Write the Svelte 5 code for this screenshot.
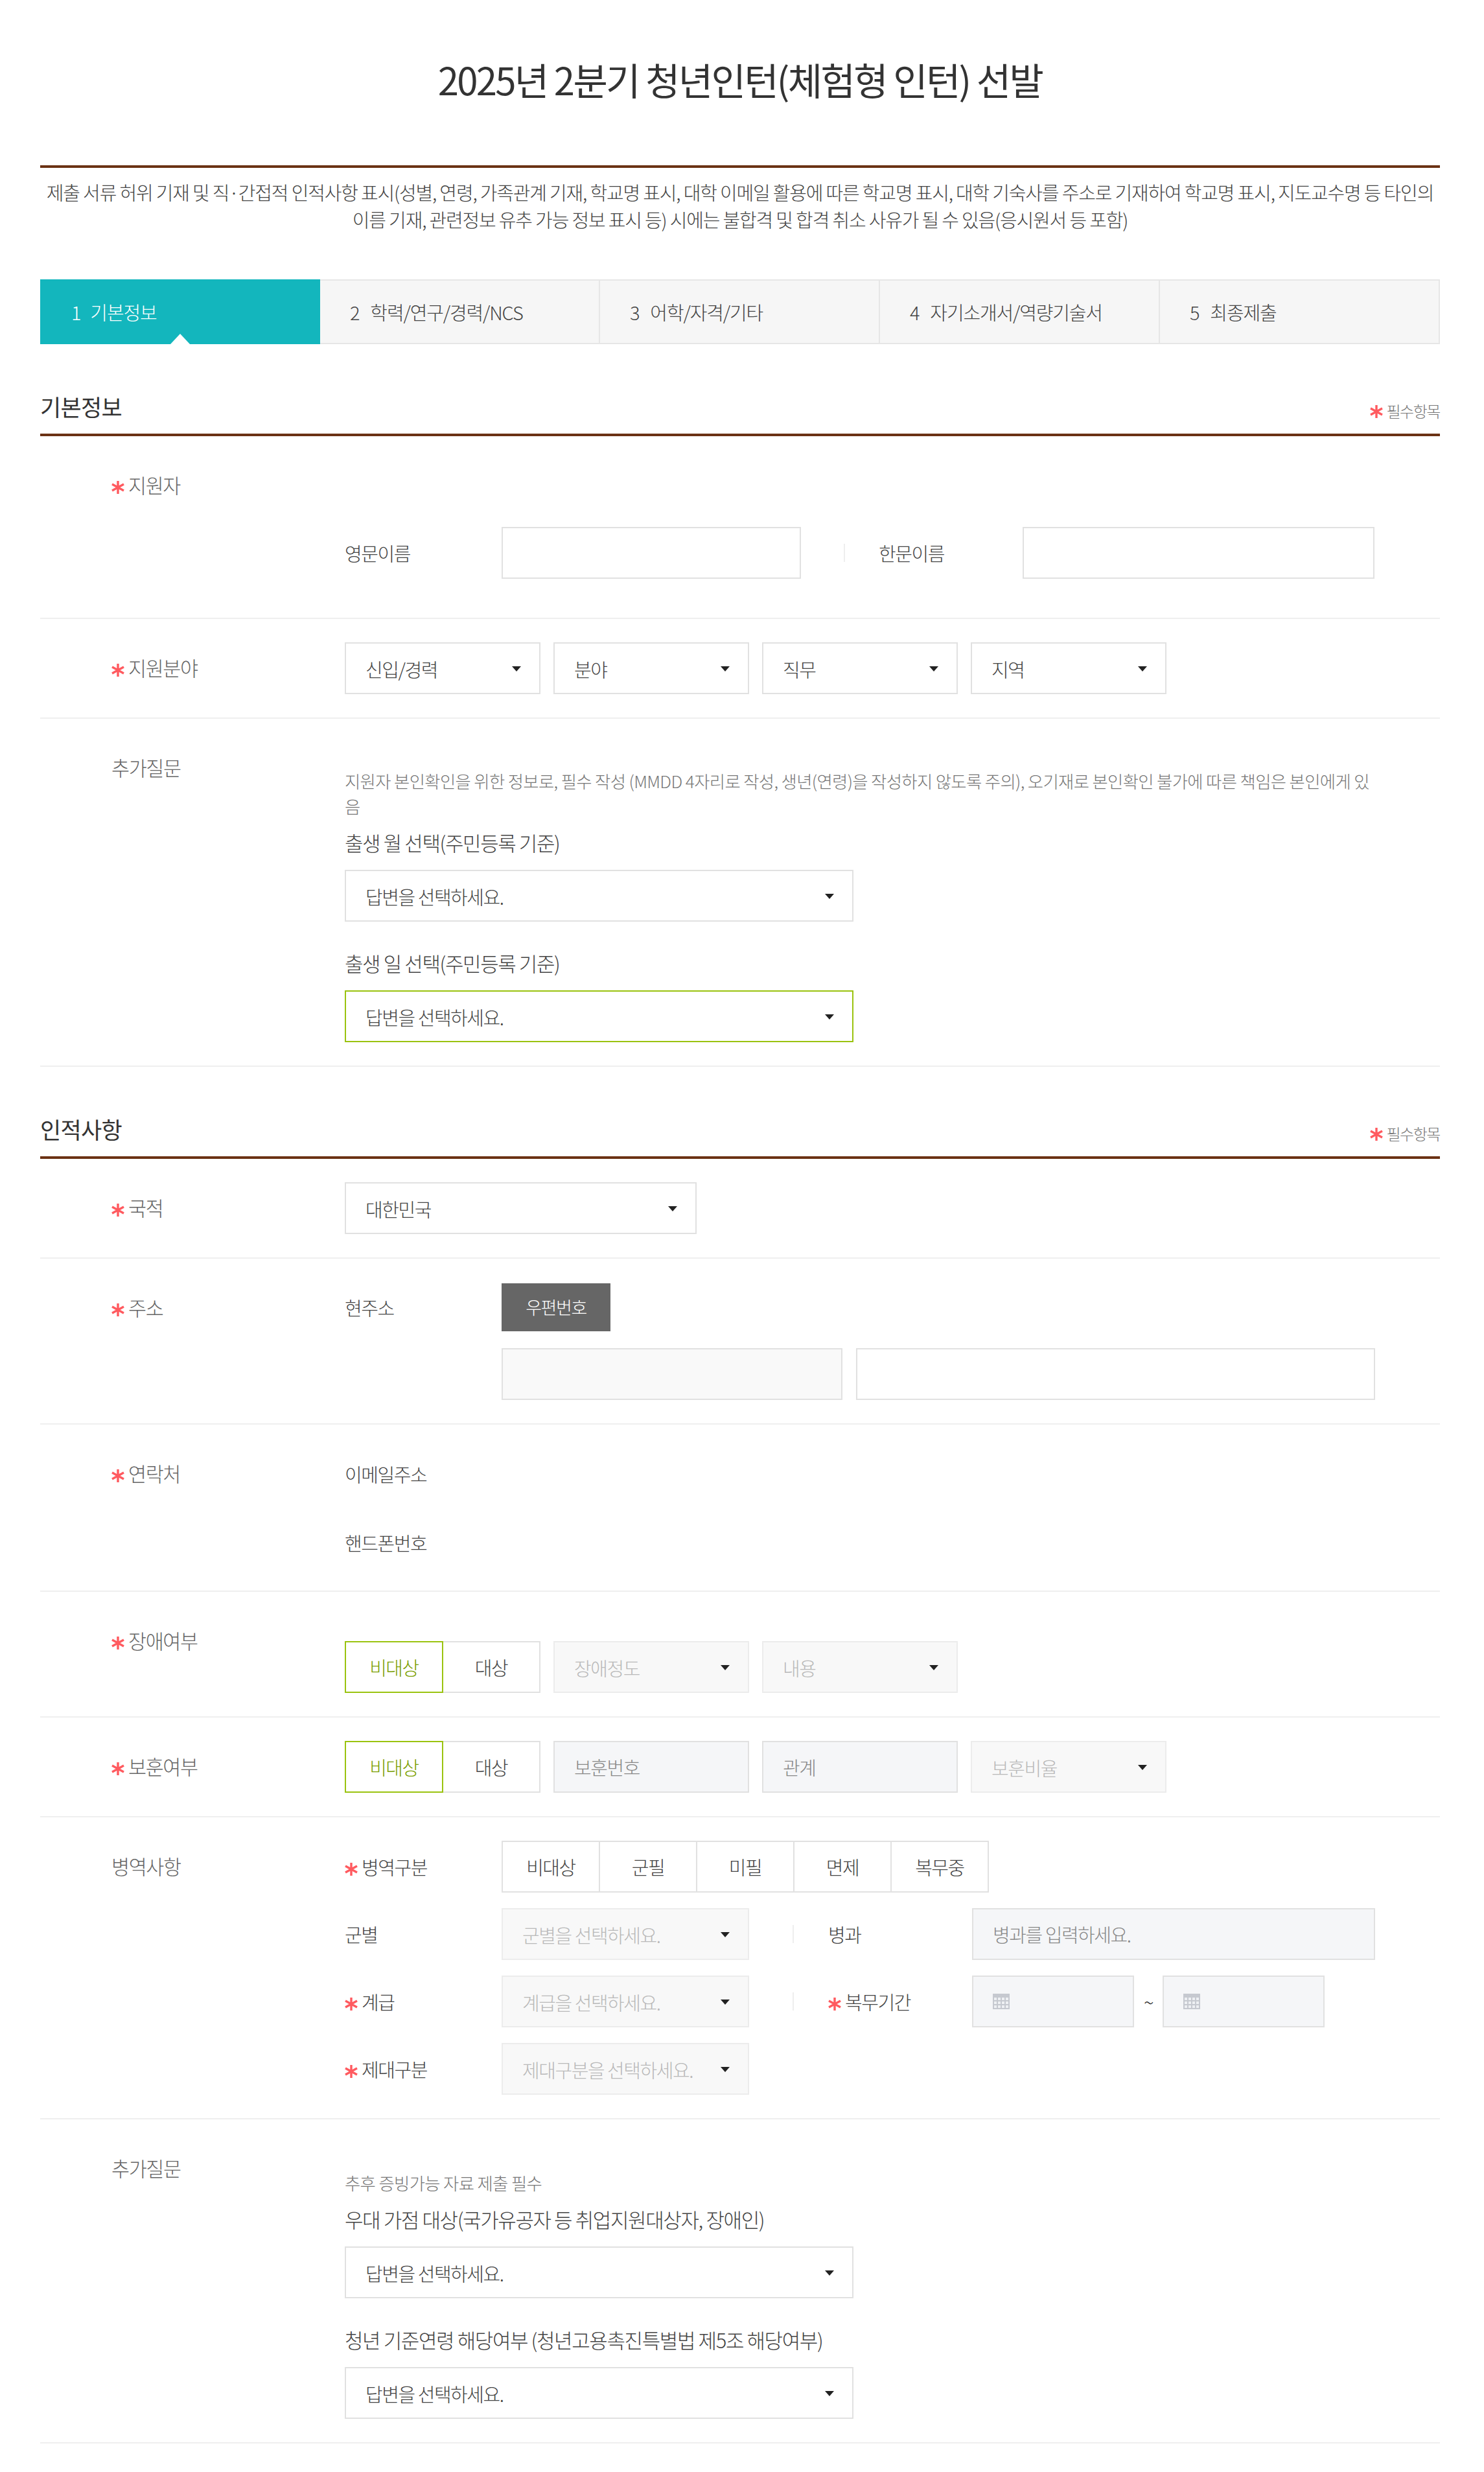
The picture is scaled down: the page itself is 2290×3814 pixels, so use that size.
<script>
	const tabs = ['기본정보', '학력/연구/경력/NCS', '어학/자격/기타', '자기소개서/역량기술서', '최종제출'];
	const military = ['비대상', '군필', '미필', '면제', '복무중'];
</script>

{#snippet star()}
	<svg class="star" viewBox="0 0 20 20" aria-hidden="true">
		<path d="M10 0v20M1 5l18 10M19 5L1 15" />
	</svg>
{/snippet}

{#snippet sel(text, cls = '')}
	<div class="sel {cls}"><span>{text}</span></div>
{/snippet}

{#snippet toggle(items, active)}
	<div class="toggle">
		{#each items as item, i}
			<button type="button" class:on={i === active}>{item}</button>
		{/each}
	</div>
{/snippet}

{#snippet calendar()}
	<svg class="cal" viewBox="0 0 26 24" aria-hidden="true">
		<rect width="26" height="24" fill="#c6c9d0" />
		{#each [6, 12, 18] as y}
			{#each [2, 8, 14, 20] as x}
				<rect {x} {y} width="4" height="4" fill="#eef0f3" />
			{/each}
		{/each}
	</svg>
{/snippet}

{#snippet section(title)}
	<div class="sec-head">
		<h2>{title}</h2>
		<span class="legend">{@render star()}필수항목</span>
	</div>
{/snippet}

<div class="page">
	<h1>2025년 2분기 청년인턴(체험형 인턴) 선발</h1>

	<p class="notice">제출 서류 허위 기재 및 직·간접적 인적사항 표시(성별, 연령, 가족관계 기재, 학교명 표시, 대학 이메일 활용에 따른 학교명 표시, 대학 기숙사를 주소로 기재하여 학교명 표시, 지도교수명 등 타인의 이름 기재, 관련정보 유추 가능 정보 표시 등) 시에는 불합격 및 합격 취소 사유가 될 수 있음(응시원서 등 포함)</p>

	<ul class="tabs">
		{#each tabs as tab, i}
			<li class:active={i === 0}><b>{i + 1}</b>{tab}</li>
		{/each}
	</ul>

	{@render section('기본정보')}

	<div class="row">
		<div class="label">{@render star()}지원자</div>
		<div class="body pt-name">
			<div class="line">
				<span class="key">영문이름</span>
				<input class="w462" />
				<i class="sep first"></i>
				<span class="key short">한문이름</span>
				<input class="w543" />
			</div>
		</div>
	</div>

	<div class="row">
		<div class="label">{@render star()}지원분야</div>
		<div class="body">
			<div class="line wrap">
				{@render sel('신입/경력')}
				{@render sel('분야')}
				{@render sel('직무')}
				{@render sel('지역')}
			</div>
		</div>
	</div>

	<div class="row">
		<div class="label">추가질문</div>
		<div class="body pt-note">
			<p class="note">지원자 본인확인을 위한 정보로, 필수 작성 (MMDD 4자리로 작성, 생년(연령)을 작성하지 않도록 주의), 오기재로 본인확인 불가에 따른 책임은 본인에게 있음</p>
			<p class="q">출생 월 선택(주민등록 기준)</p>
			{@render sel('답변을 선택하세요.', 'wide')}
			<p class="q next">출생 일 선택(주민등록 기준)</p>
			{@render sel('답변을 선택하세요.', 'wide focus')}
		</div>
	</div>

	{@render section('인적사항')}

	<div class="row">
		<div class="label">{@render star()}국적</div>
		<div class="body">{@render sel('대한민국', 'nation')}</div>
	</div>

	<div class="row">
		<div class="label">{@render star()}주소</div>
		<div class="body pt-38">
			<div class="line">
				<span class="key">현주소</span>
				<button type="button" class="zip">우편번호</button>
			</div>
			<div class="line addr">
				<input class="w526 locked" />
				<input class="w801" />
			</div>
		</div>
	</div>

	<div class="row">
		<div class="label">{@render star()}연락처</div>
		<div class="body pt-contact">
			<div class="line"><span class="key">이메일주소</span></div>
			<div class="line phone"><span class="key">핸드폰번호</span></div>
		</div>
	</div>

	<div class="row">
		<div class="label">{@render star()}장애여부</div>
		<div class="body pt-76">
			<div class="line wrap">
				{@render toggle(['비대상', '대상'], 0)}
				{@render sel('장애정도', 'off')}
				{@render sel('내용', 'off')}
			</div>
		</div>
	</div>

	<div class="row">
		<div class="label">{@render star()}보훈여부</div>
		<div class="body">
			<div class="line wrap">
				{@render toggle(['비대상', '대상'], 0)}
				<input class="w302 locked" placeholder="보훈번호" />
				<input class="w302 locked" placeholder="관계" />
				{@render sel('보훈비율', 'off')}
			</div>
		</div>
	</div>

	<div class="row">
		<div class="label">병역사항</div>
		<div class="body mil">
			<div class="line">
				<span class="key">{@render star()}병역구분</span>
				{@render toggle(military, -1)}
			</div>
			<div class="line">
				<span class="key">군별</span>
				{@render sel('군별을 선택하세요.', 'off mid')}
				<i class="sep"></i>
				<span class="key short2">병과</span>
				<input class="w624 locked" placeholder="병과를 입력하세요." />
			</div>
			<div class="line">
				<span class="key">{@render star()}계급</span>
				{@render sel('계급을 선택하세요.', 'off mid')}
				<i class="sep"></i>
				<span class="key short2">{@render star()}복무기간</span>
				<div class="date">{@render calendar()}</div>
				<span class="tilde">~</span>
				<div class="date">{@render calendar()}</div>
			</div>
			<div class="line">
				<span class="key">{@render star()}제대구분</span>
				{@render sel('제대구분을 선택하세요.', 'off mid')}
			</div>
		</div>
	</div>

	<div class="row">
		<div class="label">추가질문</div>
		<div class="body pt-note2">
			<p class="note">추후 증빙가능 자료 제출 필수</p>
			<p class="q">우대 가점 대상(국가유공자 등 취업지원대상자, 장애인)</p>
			{@render sel('답변을 선택하세요.', 'wide')}
			<p class="q next">청년 기준연령 해당여부 (청년고용촉진특별법 제5조 해당여부)</p>
			{@render sel('답변을 선택하세요.', 'wide')}
		</div>
	</div>
</div>

<style>
	:global(body) {
		margin: 0;
		background: #fff;
	}

	.page {
		width: 2160px;
		margin-left: 62px;
		padding-bottom: 42px;
		font-family: "Noto Sans CJK KR", "Noto Sans", sans-serif;
		font-weight: 300;
		font-size: 29px;
		line-height: 42px;
		color: #555;
		letter-spacing: -0.05em;
	}

	h1 {
		margin: 0;
		padding: 80px 0 0;
		box-sizing: border-box;
		border-bottom: 4px solid #6b3214;
		height: 259px;
		font-size: 58px;
		line-height: 84px;
		font-weight: 400;
		color: #333;
		text-align: center;
		letter-spacing: -0.046em;
	}

	.notice {
		margin: 16px 0 0;
		text-align: center;
		color: #444;
		letter-spacing: -0.04em;
	}

	.tabs {
		display: flex;
		margin: 72px 0 0;
		padding: 0;
		list-style: none;
	}

	.tabs li {
		flex: 1;
		height: 100px;
		box-sizing: border-box;
		padding-left: 46px;
		border: 2px solid #e6e6e6;
		border-left-width: 0;
		background: #f6f6f6;
		line-height: 96px;
		font-size: 29px;
		letter-spacing: -0.04em;
		color: #444;
	}

	.tabs li b {
		font-weight: 300;
		margin-right: 17px;
	}

	.tabs li.active {
		position: relative;
		padding-left: 48px;
		border: 0;
		background: #13b6bd;
		line-height: 100px;
		color: #fff;
	}

	.tabs li.active b {
		margin-right: 15px;
	}

	.tabs li.active::after {
		content: "";
		position: absolute;
		left: 201px;
		bottom: 0;
		border: solid transparent;
		border-width: 0 15px 16px;
		border-bottom-color: #fff;
	}

	.sec-head {
		display: flex;
		justify-content: space-between;
		align-items: center;
		height: 142px;
		box-sizing: border-box;
		padding-top: 54px;
		border-bottom: 4px solid #6b3214;
	}

	.sec-head h2 {
		margin: 0;
		font-size: 35px;
		line-height: 50px;
		font-weight: 400;
		color: #333;
		letter-spacing: -0.02em;
	}

	.legend {
		font-size: 24px;
		color: #777;
		line-height: 30px;
		transform: translateY(7px);
	}

	.legend .star {
		width: 20px;
		height: 20px;
		margin-right: 5px;
	}

	.star {
		width: 20px;
		height: 20px;
		margin-right: 6px;
		vertical-align: -1px;
	}

	.star path {
		fill: none;
		stroke: #ff5a5f;
		stroke-width: 3.4;
	}

	.row {
		display: flex;
		padding-bottom: 36px;
		border-bottom: 2px solid #efefef;
	}

	.label {
		width: 360px;
		margin: 54px 0 0 110px;
		font-size: 30.5px;
		letter-spacing: -0.045em;
		color: #666;
	}

	.body {
		flex: 1;
		padding: 36px 100px 0 0;
		min-width: 0;
	}

	.pt-name {
		padding-top: 140px;
	}

	.pt-name .line {
		padding-bottom: 24px;
	}

	.pt-note {
		padding-top: 76px;
	}

	.pt-note2 {
		padding-top: 78px;
	}

	.pt-38 {
		padding-top: 38px;
	}

	.pt-contact {
		padding-top: 55px;
		padding-bottom: 17px;
	}

	.pt-76 {
		padding-top: 76px;
	}

	.line {
		display: flex;
		align-items: center;
	}

	.wrap {
		gap: 20px;
	}

	.key {
		width: 242px;
		flex: none;
		color: #444;
	}

	.short {
		width: 222px;
	}

	.short2 {
		width: 222px;
	}

	.sep {
		flex: none;
		width: 2px;
		height: 28px;
		margin: 0 53px 0 67px;
		background: #eee;
	}

	.sep.first {
		margin: 0 52px 0 66px;
	}

	input {
		box-sizing: border-box;
		height: 80px;
		padding: 0 30px;
		border: 2px solid #e1e1e1;
		border-radius: 0;
		background: #fff;
		outline: 0;
		font: inherit;
		letter-spacing: inherit;
		color: #444;
	}

	input::placeholder {
		color: #888;
		opacity: 1;
	}

	.locked {
		background: #f5f6f8;
	}

	.w462 {
		width: 462px;
	}

	.w543 {
		width: 543px;
	}

	.w526 {
		width: 526px;
		background: #f9f9f9;
	}

	.w801 {
		width: 801px;
	}

	.w302 {
		width: 302px;
	}

	.w624 {
		width: 624px;
	}

	.sel {
		position: relative;
		box-sizing: border-box;
		flex: none;
		width: 302px;
		height: 80px;
		padding: 0 60px 0 30px;
		border: 2px solid #e1e1e1;
		background: #fff;
		line-height: 78px;
		color: #444;
		white-space: nowrap;
	}

	.sel::after {
		content: "";
		position: absolute;
		right: 28px;
		top: 35px;
		border: solid transparent;
		border-width: 8px 7px 0;
		border-top-color: #222;
	}

	.sel.wide {
		width: 785px;
	}

	.sel.nation {
		width: 543px;
	}

	.sel.mid {
		width: 382px;
	}

	.sel.focus {
		border: 2px solid #9ac30f;
	}

	.sel.off {
		border-color: #ececec;
		background: #f8f8f8;
		color: #b9b9b9;
	}

	.toggle {
		display: flex;
		flex: none;
	}

	.toggle button {
		box-sizing: border-box;
		width: 152px;
		height: 80px;
		margin-left: -2px;
		padding: 0;
		border: 2px solid #e1e1e1;
		border-radius: 0;
		background: #fff;
		font: inherit;
		letter-spacing: inherit;
		color: #444;
	}

	.toggle button:first-child {
		margin-left: 0;
	}

	.toggle button.on {
		position: relative;
		border-color: #9ac30f;
		color: #7a9e00;
	}

	.zip {
		box-sizing: border-box;
		width: 168px;
		height: 74px;
		padding: 0;
		border: 0;
		background: #666;
		font: inherit;
		letter-spacing: inherit;
		font-size: 27px;
		color: #fff;
	}

	.addr {
		gap: 21px;
		margin: 26px 0 0 242px;
	}

	.phone {
		margin-top: 64px;
	}

	.mil .line {
		min-height: 80px;
		margin-bottom: 24px;
	}

	.mil .line:last-child {
		margin-bottom: 0;
	}

	.date {
		box-sizing: border-box;
		display: flex;
		align-items: center;
		width: 250px;
		height: 80px;
		padding-left: 30px;
		border: 2px solid #e1e1e1;
		background: #f5f6f8;
	}

	.cal {
		width: 26px;
		height: 24px;
	}

	.tilde {
		width: 44px;
		text-align: center;
		color: #333;
	}

	.note {
		margin: 0;
		font-size: 26.4px;
		line-height: 39px;
		letter-spacing: -0.025em;
		color: #777;
	}

	.q {
		margin: 16px 0 0;
		padding-bottom: 21px;
		font-size: 31px;
		line-height: 42px;
		letter-spacing: -0.045em;
		color: #444;
	}

	.q.next {
		margin-top: 43px;
	}
</style>
